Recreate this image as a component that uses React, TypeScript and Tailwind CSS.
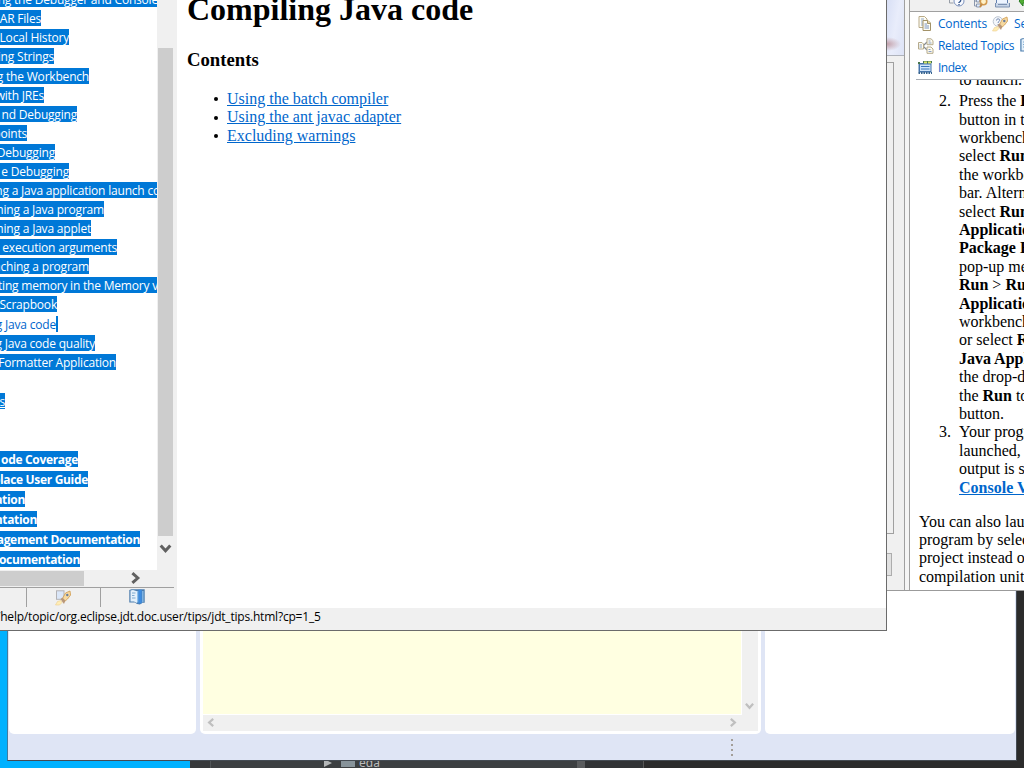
import React from "react";

type Row = { text: string; w: string; gap?: string; bold?: boolean; underline?: boolean; plain?: boolean };

const rows: Row[] = [
  { text: "ing the Debugger and Console", w: "w-[158px]", gap: "mt-[-9px]" },
  { text: "AR Files", w: "w-[41px]" },
  { text: "Local History", w: "w-[69px]" },
  { text: "ing Strings", w: "w-[54px]" },
  { text: "g the Workbench", w: "w-[89px]", gap: "mt-[4px]" },
  { text: "with JREs", w: "w-[44px]" },
  { text: "nd Debugging", w: "w-[77px]" },
  { text: "points", w: "w-[27px]" },
  { text: "Debugging", w: "w-[55px]" },
  { text: "e Debugging", w: "w-[69px]" },
  { text: "ing a Java application launch co", w: "w-[160px]" },
  { text: "hing a Java program", w: "w-[104px]" },
  { text: "hing a Java applet", w: "w-[91px]" },
  { text: "ng execution arguments", w: "w-[117px]" },
  { text: "aching a program", w: "w-[89px]" },
  { text: "tting memory in the Memory v", w: "w-[158px]" },
  { text: "Scrapbook", w: "w-[57px]" },
  { text: "g Java code", w: "w-[58px]", gap: "mt-[4px]", plain: true },
  { text: "g Java code quality", w: "w-[95px]" },
  { text: "Formatter Application", w: "w-[116px]" },
  { text: "s", w: "w-[5px]", gap: "mt-[23px]", underline: true },
  { text: "ode Coverage", w: "w-[78px]", gap: "mt-[42px]", bold: true },
  { text: "place User Guide", w: "w-[88px]", gap: "mt-[4px]", bold: true },
  { text: "ation", w: "w-[25px]", gap: "mt-[4px]", bold: true },
  { text: "ntation", w: "w-[37px]", gap: "mt-[4px]", bold: true },
  { text: "agement Documentation", w: "w-[140px]", gap: "mt-[4px]", bold: true },
  { text: "Documentation", w: "w-[80px]", gap: "mt-[4px]", bold: true },
];

function Chevron({ dir, color, className }: { dir: "left" | "right" | "down"; color: string; className: string }) {
  const d = dir === "left" ? "M8 1 3.500 5 8 9" : dir === "right" ? "M2 1 6.500 5 2 9" : "M1 2 5 6.500 9 2";
  return (
    <svg viewBox="0 0 10 10" className={className} fill="none" stroke={color} strokeWidth="2.500">
      <path d={d} />
    </svg>
  );
}

function RocketIcon({ help }: { help?: boolean }) {
  return (
    <svg viewBox="0 0 16 16" className="h-4 w-4 shrink-0">
      {help ? (
        <>
          <circle cx="6" cy="5.500" r="4.800" fill="#f4f7fb" stroke="#bcc4d0" />
          <path d="M4.500 4.500q0-1.700 1.600-1.700t1.600 1.500Q7.700 5.300 6.200 6V7M6.200 8v1" fill="none" stroke="#7a8fb5" />
        </>
      ) : (
        <rect x="1.500" y=".8" width="7.500" height="8.500" fill="#dae6f8" stroke="#b3b2b5" />
      )}
      <path d="M7 9.500 10.500 3 15 1l.6 4L12.500 9 9 12Z" fill="#f6d9a0" stroke="#d19a4c" strokeWidth=".8" />
      <path d="m5.500 9 2-1.500 2.800 3L9 14l-1.500-2Z" fill="#b8977a" />
      <path d="M.5 15 2.500 11.500 6 10.500l1 2L4.500 15Z" fill="#ffedb5" stroke="#eccf8e" strokeWidth=".6" />
      <circle cx="12.300" cy="5" r="1.200" fill="#687d9e" />
    </svg>
  );
}

function BookIcon() {
  return (
    <svg viewBox="0 0 16 16" className="h-4 w-4 shrink-0">
      <path d="M.3 1 2.500.3H15.700v13.500H13L11 15.500 8 15l-2-1.500H.3Z" fill="#4b7cad" />
      <path d="M1.500 1.500 4 1l4 1.200V14l-3-1.500H1.500Z" fill="#e3f0fb" />
      <path d="M3 4h3.500M3 6.500h2.500M3 9h3.500" stroke="#7faacf" />
      <path d="M8 2h1.500v11.500H8zM13.200 2h1.300v11h-1.300z" fill="#8cc0ee" />
      <path d="M9.500.8h3.200V15l-1.600-1.200L9.500 15Z" fill="#3c8be0" />
    </svg>
  );
}

function PagesIcon() {
  return (
    <svg viewBox="0 0 16 16" className="h-4 w-4 shrink-0">
      <path d="M1 .5h5.500L9 3v8.500H1Z" fill="#fffdf2" stroke="#b8aa88" />
      <path d="M3 3h3M3 5h2M3 7h2M3 9h2" stroke="#8fa6cc" />
      <path d="M5 4.500h5L12.500 7v7.500H5Z" fill="#fffdf2" stroke="#a39268" />
      <path d="M9.500 4.500V7.500h3" fill="#e9d6a0" stroke="#a39268" />
      <path d="M6.500 8H9M6.500 10h4.500M6.500 12h4.500" stroke="#7893c2" />
    </svg>
  );
}

function TopicsIcon() {
  return (
    <svg viewBox="0 0 16 16" className="h-4 w-4 shrink-0">
      <path d="m5 8 4-4M5 8l4 4" stroke="#858b92" strokeWidth="1.200" />
      <g fill="#fffcee" stroke="#b5aa8c">
        <path d="M.5 4.500h3.500L5.500 6v5H.5ZM9 .8h4L15 2.700v4H9ZM9 9h4l2 2v4.300H9Z" />
      </g>
      <path d="M1.500 7h2.500M1.500 9h2.500M10.500 3h2M10.500 5h3M10.500 11.500h2M10.500 13.500h3" stroke="#8ba1c6" />
    </svg>
  );
}

function IndexIcon() {
  return (
    <svg viewBox="0 0 16 16" className="h-4 w-4 shrink-0">
      <path d="M.5 3h13v9.500H.5Z" fill="#4674ab" />
      <path d="M0 2h2v2H0zM5 1h9v2H5Z" fill="#49764e" />
      <path d="M6 1.500h3v2H6zM10 1.500h3v2h-3z" fill="#d8e56a" />
      <path d="M2 4.500h10.500v6.500H2Z" fill="#cfe5fb" />
      <path d="M3 6.500h8.500M3 9h8.500" stroke="#3b77b7" />
      <path d="M.5 13h13.500" stroke="#38658f" strokeWidth="2" strokeDasharray="1.500 1" />
    </svg>
  );
}

function ToolbarIcons() {
  return (
    <svg viewBox="0 0 76 11" className="ml-[38px] h-[11px] w-[76px] shrink-0">
      <path d="M1.500 0v3h4" fill="none" stroke="#979da6" />
      <circle cx="11" cy="1" r="5" fill="#f8faff" stroke="#7e93bd" />
      <path d="M11 3V2.500q2-1 1.800-2.800M11 4v1.300" fill="none" stroke="#345488" strokeWidth="1.300" />
      <path d="M26.500 0v6h3M26.500 1h3" fill="none" stroke="#8a97ad" />
      <path d="M28.500-1h3v3h-3zM28.500 4h4v3h-4z" fill="#dceaff" stroke="#8a97ad" />
      <circle cx="35.500" cy="1.500" r="3.200" fill="#fff1c7" stroke="#d39a4f" strokeWidth="1.600" />
      <path d="m34 4-2 3" stroke="#c58b45" strokeWidth="2" />
      <path d="M48.500-1v7h11v-7" fill="#edf4ff" stroke="#6280af" />
      <path d="M47.500 3v4h14V3M50 4.500h9" fill="#c8d5e7" stroke="#7d91b1" />
      <path d="M71 1 75-3V0h3v3h-3v3Z" fill="#52ad34" stroke="#297c25" />
    </svg>
  );
}

function Desktop() {
  return (
    <div className="flex h-[768px] w-[1024px] items-end bg-[#2b2b2b]">
      <div className="h-[168px] w-[190px] shrink-0 bg-[#00b1ff]" />
      <div className="flex h-2 flex-1 overflow-hidden bg-[#3c3f41]">
        <div className="w-[21px] border-r border-[#515557] bg-[#37393b]" />
        <div className="flex h-2 w-[366px] overflow-hidden pl-[113px]">
          <svg viewBox="0 0 8 8" className="h-2 w-2 shrink-0"><path d="M0-1 8 3 0 7Z" fill="#b4b7b8" /></svg>
          <div className="ml-[9px] h-[7px] w-3.5 shrink-0 bg-[#87939a]" />
          <span className="ml-1 mt-[-5px] font-['Noto_Sans'] text-[12px] leading-4 text-[#bbbbbb]">eda</span>
        </div>
        <div className="w-2 bg-[#595b5d]" />
        <div className="w-[59px] border-r border-[#555] bg-[#313335]" />
        <div className="flex-1 bg-[#2b2b2b]" />
      </div>
    </div>
  );
}

function EditorWindow() {
  return (
    <section className="absolute left-[7px] top-[560px] flex h-[201px] w-[1010px] flex-col border border-[#447b9e] border-b-[#444b53] border-r-[#444b53] bg-[#dfe5f5]">
      <div className="flex h-[173px] gap-1 pl-px">
        <div className="w-[187px] rounded-b-[5px] bg-white" />
        <div className="flex w-[561px] flex-col rounded-b-[5px] bg-white px-[3px] pb-[3px]">
          <div className="flex min-h-0 flex-1">
            <div className="mb-px mr-px flex-1 bg-[#ffffe1]" />
            <div className="flex w-4 items-end bg-[#f0f0f0] pb-1 pl-[3px]">
              <Chevron dir="down" color="#bfbfbf" className="h-[9px] w-[9px]" />
            </div>
          </div>
          <div className="flex h-4 items-start justify-between bg-[#f0f0f0] pl-[3px] pr-5 pt-[3px]">
            <Chevron dir="left" color="#bfbfbf" className="h-[9px] w-[9px]" />
            <Chevron dir="right" color="#bfbfbf" className="h-[9px] w-[9px]" />
          </div>
        </div>
        <div className="w-[250px] rounded-b-[5px] bg-white" />
      </div>
      <div className="flex flex-col gap-[3px] pl-[723px] pt-[5px]">
        {[0, 1, 2, 3].map((n) => <i key={n} className="h-0.5 w-0.5 bg-[#a39e98]" />)}
      </div>
    </section>
  );
}

function HelpPanel() {
  return (
    <section className="absolute left-[880px] top-0 flex h-[591px] w-[144px] overflow-hidden border-b border-[#9b9b9b] bg-[#f0f0f0]">
      <div className="flex w-[25px] shrink-0 flex-col border-r border-[#a0a0a0]">
        <div className="h-[56px] border-b border-[#aeb2bb] bg-[radial-gradient(ellipse_14px_7px_at_7px_44px,#c3a0aa_0%,transparent_100%),linear-gradient(100deg,#cfd8f2_0%,#e9edfb_60%,#dde3f6_100%)]" />
        <div className="mt-[6px] h-[472px] w-[14px] border border-[#a0a0a0]" />
        <div className="mt-[19px] h-[23px] w-[12px] border border-[#adadad] bg-[#e1e1e1]" />
      </div>
      <div className="w-[5px] shrink-0 border-r border-[#a0a0a0] bg-[#f5f5f5]" />
      <div className="flex w-[114px] shrink-0 flex-col overflow-hidden bg-white">
        <div className="h-3 shrink-0 overflow-hidden border-b border-[#a0a0a0] bg-[#f0f0f0]"><ToolbarIcons /></div>
        <nav className="ml-[6px] h-[68px] w-[108px] shrink-0 overflow-hidden border-b border-[#a9aeb5] pl-[2px] pt-px font-['Open_Sans'] text-[12px] tracking-[-0.2px] text-[#0066cc]">
          <div className="flex h-[22px] items-center whitespace-nowrap"><PagesIcon /><span className="ml-1 w-[54px] shrink-0">Contents</span><RocketIcon help /><span className="ml-[6px] shrink-0">Se</span></div>
          <div className="flex h-[22px] items-center whitespace-nowrap"><TopicsIcon /><span className="ml-1 w-[82px] shrink-0 tracking-[-0.35px]">Related Topics</span><BookIcon /></div>
          <div className="flex h-[22px] items-center"><IndexIcon /><span className="ml-1 tracking-[-0.5px]">Index</span></div>
        </nav>
        <article className="min-h-0 flex-1 overflow-hidden whitespace-nowrap font-['Liberation_Serif'] text-[16px] leading-[18.4px] text-black">
          <ol start={2} className="mt-[-9px] list-none pl-[49px]">
            <li>to launch.</li>
            <li className="ml-[-20px] mt-[2.7px] flex"><span className="w-5 shrink-0">2.</span>
              <div>Press the <b>R</b><br />button in the<br />workbench<br />select <b>Run</b><br />the workbench<br />bar. Altern<br />select <b>Run</b><br /><b>Application</b><br /><b>Package E</b><br />pop-up menu<br /><b>Run</b> &gt; <b>Run</b><br /><b>Application</b><br />workbench<br />or select <b>R</b><br /><b>Java Appl</b><br />the drop-down<br />the <b>Run</b> to<br />button.</div>
            </li>
            <li className="ml-[-20px] flex"><span className="w-5 shrink-0">3.</span>
              <div>Your progr<br />launched,<br />output is s<br /><a className="font-bold text-[#0066cc] underline">Console V</a></div>
            </li>
          </ol>
          <p className="ml-[9px] mt-[15.6px]">You can also laun<br />program by select<br />project instead of<br />compilation unit</p>
        </article>
      </div>
    </section>
  );
}

function Contents() {
  return (
    <aside className="flex w-[177px] shrink-0 flex-col bg-[#f0f0f0]">
      <div className="flex h-[570px]">
        <div className="flex w-[157px] shrink-0 flex-col items-start overflow-hidden bg-white">
          {rows.map((r, i) => (
            <div key={i} className={`${r.w} ${r.gap ?? "mt-[3px]"} ${r.plain ? "border-r-2 border-[#0078d7] text-[#0066cc]" : "bg-[#0078d7] text-white"} ${r.bold ? "font-bold tracking-[-0.32px]" : "tracking-[-0.2px]"} ${r.underline ? "underline" : ""} flex h-4 shrink-0 justify-end overflow-hidden whitespace-nowrap font-['Open_Sans'] text-[12px] leading-[17px]`}>
              <span>{r.text}</span>
            </div>
          ))}
        </div>
        <div className="flex w-5 flex-col pl-px">
          <div className="mt-12 h-[488px] w-[15px] bg-[#cdcdcd]" />
          <Chevron dir="down" color="#606060" className="ml-px mt-[7px] h-3 w-[13px]" />
        </div>
      </div>
      <div className="flex h-[17px] items-center">
        <div className="h-[15px] w-[84px] bg-[#cdcdcd]" />
        <Chevron dir="right" color="#606060" className="mb-px ml-[46px] h-3 w-3" />
      </div>
      <div className="flex h-[21px] w-[174px] border-t border-[#a0a0a0]">
        <div className="h-[19px] w-[27px] border-r border-[#a0a0a0]" />
        <div className="flex h-[19px] w-[74px] border-r border-[#a0a0a0] pl-7 pt-[2px]"><RocketIcon /></div>
        <div className="flex h-[19px] flex-1 pl-7 pt-px"><BookIcon /></div>
      </div>
    </aside>
  );
}

function HelpWindow() {
  const links = ["Using the batch compiler", "Using the ant javac adapter", "Excluding warnings"];
  return (
    <section className="absolute left-0 top-0 flex h-[631px] w-[887px] flex-col border-b border-r border-[#6b6b6b] bg-[#f0f0f0]">
      <div className="flex h-[608px]">
        <Contents />
        <main className="flex-1 overflow-hidden bg-white pl-[10px] font-['Liberation_Serif'] text-[16px] leading-[18.4px] text-black">
          <h1 className="mt-[-9px] text-[32px] font-bold leading-[37px]">Compiling Java code</h1>
          <h2 className="mt-[21px] text-[18.72px] font-bold leading-[22px]">Contents</h2>
          <ul className="ml-[27px] mt-[18.9px] text-[#0066cc]">
            {links.map((t) => (
              <li key={t} className="flex items-center">
                <i className="mr-[9px] h-1 w-1 rounded-full bg-black" />
                <a className="underline">{t}</a>
              </li>
            ))}
          </ul>
        </main>
      </div>
      <footer className="flex h-[22px] overflow-hidden whitespace-nowrap font-['Open_Sans'] text-[12px] leading-[18px] tracking-[-0.2px] text-black">
        <span className="ml-[-4px]">/help/topic/org.eclipse.jdt.doc.user/tips/jdt_tips.html?cp=1_5</span>
      </footer>
    </section>
  );
}

export default function App() {
  return (
    <div className="relative h-[768px] w-[1024px] overflow-hidden">
      <Desktop />
      <EditorWindow />
      <HelpPanel />
      <HelpWindow />
    </div>
  );
}
